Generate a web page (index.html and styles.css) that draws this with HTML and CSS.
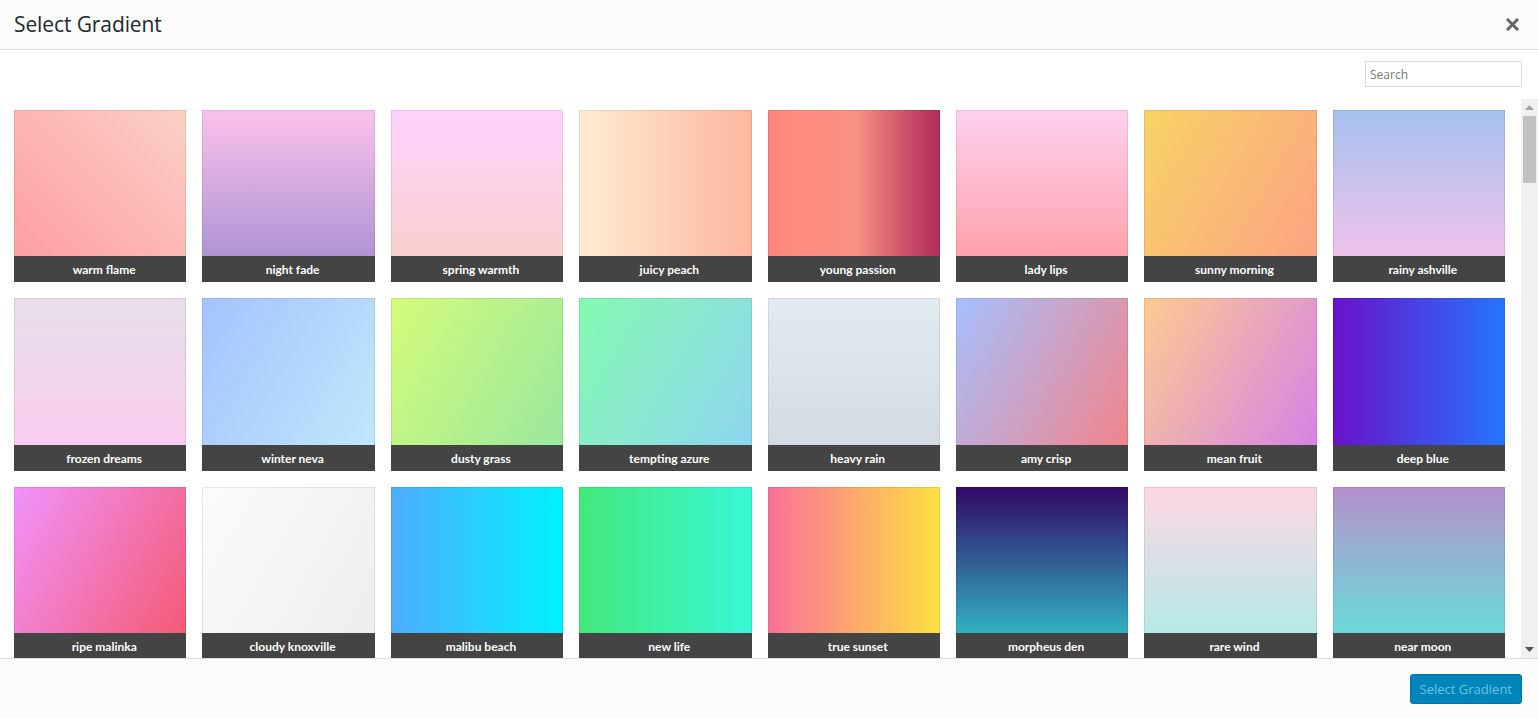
FILE: index.html
```html
<!DOCTYPE html>
<html>
<head>
<meta charset="utf-8">
<title>Select Gradient</title>
<link rel="stylesheet" href="styles.css">
</head>
<body>
<div class="modal">
  <header class="modal-header">
    <h1 class="modal-title">Select Gradient</h1>
    <button class="close-btn" aria-label="Close">
      <svg width="13" height="13" viewBox="0 0 13 13"><path d="M2 2 L11 11 M11 2 L2 11" stroke="#666" stroke-width="3" stroke-linecap="square"/></svg>
    </button>
  </header>
  <div class="toolbar">
    <input class="search" type="text" placeholder="Search">
  </div>
  <div class="body">
    <div class="grid">
      <div class="tile g-warm-flame"><span class="label">warm flame</span></div>
      <div class="tile g-night-fade"><span class="label">night fade</span></div>
      <div class="tile g-spring-warmth"><span class="label">spring warmth</span></div>
      <div class="tile g-juicy-peach"><span class="label">juicy peach</span></div>
      <div class="tile g-young-passion"><span class="label">young passion</span></div>
      <div class="tile g-lady-lips"><span class="label">lady lips</span></div>
      <div class="tile g-sunny-morning"><span class="label">sunny morning</span></div>
      <div class="tile g-rainy-ashville"><span class="label">rainy ashville</span></div>
      <div class="tile g-frozen-dreams"><span class="label">frozen dreams</span></div>
      <div class="tile g-winter-neva"><span class="label">winter neva</span></div>
      <div class="tile g-dusty-grass"><span class="label">dusty grass</span></div>
      <div class="tile g-tempting-azure"><span class="label">tempting azure</span></div>
      <div class="tile g-heavy-rain"><span class="label">heavy rain</span></div>
      <div class="tile g-amy-crisp"><span class="label">amy crisp</span></div>
      <div class="tile g-mean-fruit"><span class="label">mean fruit</span></div>
      <div class="tile g-deep-blue"><span class="label">deep blue</span></div>
      <div class="tile g-ripe-malinka"><span class="label">ripe malinka</span></div>
      <div class="tile g-cloudy-knoxville"><span class="label">cloudy knoxville</span></div>
      <div class="tile g-malibu-beach"><span class="label">malibu beach</span></div>
      <div class="tile g-new-life"><span class="label">new life</span></div>
      <div class="tile g-true-sunset"><span class="label">true sunset</span></div>
      <div class="tile g-morpheus-den"><span class="label">morpheus den</span></div>
      <div class="tile g-rare-wind"><span class="label">rare wind</span></div>
      <div class="tile g-near-moon"><span class="label">near moon</span></div>
    </div>
    <div class="scrollbar">
      <div class="sb-arrow"><svg width="9" height="5" viewBox="0 0 9 5"><path d="M0 5 L4.5 0 L9 5 Z" fill="#a3a3a3"/></svg></div>
      <div class="sb-thumb"></div>
      <div class="sb-track"></div>
      <div class="sb-arrow"><svg width="9" height="5" viewBox="0 0 9 5"><path d="M0 0 L4.5 5 L9 0 Z" fill="#505050"/></svg></div>
    </div>
  </div>
  <footer class="modal-footer">
    <button class="primary-btn">Select Gradient</button>
  </footer>
</div>
</body>
</html>
```
FILE: styles.css
```css
* { box-sizing: border-box; }
html, body { margin: 0; padding: 0; }
body {
  width: 1538px;
  height: 718px;
  overflow: hidden;
  background: #fff;
  font-family: "Open Sans", "Noto Sans", sans-serif;
  color: #23282d;
}
.modal {
  display: flex;
  flex-direction: column;
  height: 718px;
}
.modal-header {
  flex: 0 0 50px;
  display: flex;
  align-items: center;
  justify-content: space-between;
  padding: 0 19px 1px 14px;
  background: #fcfcfc;
  border-bottom: 1px solid #dddddd;
}
.modal-title {
  margin: 0;
  font-size: 21px;
  font-weight: 500;
  color: #23282d;
  letter-spacing: -0.1px;
}
.close-btn {
  border: 0;
  background: none;
  padding: 0;
  display: flex;
  cursor: pointer;
}
.toolbar {
  flex: 0 0 49px;
  display: flex;
  justify-content: flex-end;
  align-items: flex-start;
  padding: 11px 16px 0 0;
}
.search {
  width: 157px;
  height: 26px;
  border: 1px solid #dddddd;
  padding: 0 4px;
  font-family: "Open Sans", sans-serif;
  font-size: 12px;
  color: #32373c;
  background: #fff;
  outline: none;
}
.search::placeholder { color: #777; }
.body {
  flex: 0 0 559px;
  display: flex;
  overflow: hidden;
}
.grid {
  flex: 1;
  display: grid;
  grid-template-columns: repeat(8, 1fr);
  column-gap: 16px;
  row-gap: 16px;
  padding: 11px 16px 0 14px;
  overflow: hidden;
  align-content: start;
}
.tile {
  aspect-ratio: 1 / 1;
  display: flex;
  flex-direction: column;
  justify-content: flex-end;
  box-shadow: inset 0 0 0 1px rgba(0,0,0,0.08);
}
.label {
  height: 26px;
  line-height: 26px;
  padding: 1px 0 0 8px;
  background: #444444;
  color: #ffffff;
  text-align: center;
  font-family: Lato, "Open Sans", sans-serif;
  font-size: 12px;
  font-weight: 700;
}
.scrollbar {
  flex: 0 0 17px;
  display: flex;
  flex-direction: column;
  background: #f0f0f0;
}
.sb-arrow {
  flex: 0 0 17px;
  display: flex;
  align-items: center;
  justify-content: center;
}
.sb-thumb {
  flex: 0 0 67px;
  margin: 0 2px 0 2px;
  background: #c1c1c1;
}
.sb-track { flex: 1; }
.modal-footer {
  flex: 1;
  display: flex;
  justify-content: flex-end;
  align-items: flex-start;
  padding: 15px 16px 0 0;
  background: #fcfcfc;
  border-top: 1px solid #dddddd;
}
.primary-btn {
  height: 30px;
  padding: 0 9px;
  border: 1px solid #0073aa;
  border-radius: 3px;
  background: #0085ba;
  color: #66c6e4;
  font-family: "Open Sans", sans-serif;
  font-size: 13px;
  line-height: 28px;
}

.g-warm-flame { background-image: linear-gradient(45deg, #ff9a9e 0%, #fad0c4 99%, #fad0c4 100%); }
.g-night-fade { background-image: linear-gradient(to top, #a18cd1 0%, #fbc2eb 100%); }
.g-spring-warmth { background-image: linear-gradient(to top, #fad0c4 0%, #ffd1ff 100%); }
.g-juicy-peach { background-image: linear-gradient(to right, #ffecd2 0%, #fcb69f 100%); }
.g-young-passion { background-image: linear-gradient(to right, #ff8177 0%, #ff867a 0%, #ff8c7f 21%, #f99185 52%, #cf556c 78%, #b12a5b 100%); }
.g-lady-lips { background-image: linear-gradient(to top, #ff9a9e 0%, #fecfef 99%, #fecfef 100%); }
.g-sunny-morning { background-image: linear-gradient(120deg, #f6d365 0%, #fda085 100%); }
.g-rainy-ashville { background-image: linear-gradient(to top, #fbc2eb 0%, #a6c1ee 100%); }
.g-frozen-dreams { background-image: linear-gradient(to top, #fdcbf1 0%, #fdcbf1 1%, #e6dee9 100%); }
.g-winter-neva { background-image: linear-gradient(120deg, #a1c4fd 0%, #c2e9fb 100%); }
.g-dusty-grass { background-image: linear-gradient(120deg, #d4fc79 0%, #96e6a1 100%); }
.g-tempting-azure { background-image: linear-gradient(120deg, #84fab0 0%, #8fd3f4 100%); }
.g-heavy-rain { background-image: linear-gradient(to top, #cfd9df 0%, #e2ebf0 100%); }
.g-amy-crisp { background-image: linear-gradient(120deg, #a6c0fe 0%, #f68084 100%); }
.g-mean-fruit { background-image: linear-gradient(120deg, #fccb90 0%, #d57eeb 100%); }
.g-deep-blue { background-image: linear-gradient(to right, #6a11cb 0%, #2575fc 100%); }
.g-ripe-malinka { background-image: linear-gradient(120deg, #f093fb 0%, #f5576c 100%); }
.g-cloudy-knoxville { background-image: linear-gradient(120deg, #fdfbfb 0%, #ebedee 100%); }
.g-malibu-beach { background-image: linear-gradient(to right, #4facfe 0%, #00f2fe 100%); }
.g-new-life { background-image: linear-gradient(to right, #43e97b 0%, #38f9d7 100%); }
.g-true-sunset { background-image: linear-gradient(to right, #fa709a 0%, #fee140 100%); }
.g-morpheus-den { background-image: linear-gradient(to top, #30cfd0 0%, #330867 100%); }
.g-rare-wind { background-image: linear-gradient(to top, #a8edea 0%, #fed6e3 100%); }
.g-near-moon { background-image: linear-gradient(to top, #5ee7df 0%, #b490ca 100%); }
```
